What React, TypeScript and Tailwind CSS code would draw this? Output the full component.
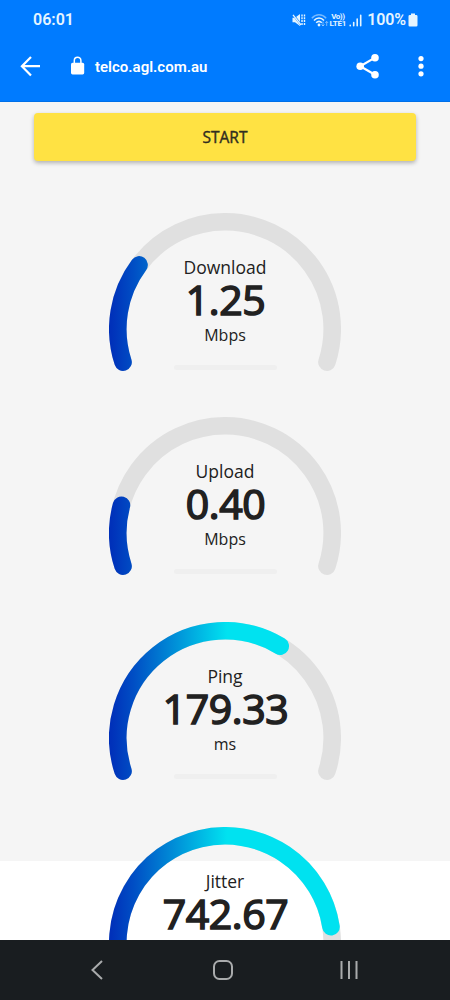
interface GaugeProps {
  label: string
  value: string
  unit: string
  // degrees covered by the coloured arc, out of 216
  sweep: number
}

const gauges: GaugeProps[] = [
  { label: 'Download', value: '1.25', unit: 'Mbps', sweep: 54.7 },
  { label: 'Upload', value: '0.40', unit: 'Mbps', sweep: 33 },
  { label: 'Ping', value: '179.33', unit: 'ms', sweep: 139 },
  { label: 'Jitter', value: '742.67', unit: 'ms', sweep: 189.3 },
]

const CENTER = 116
const RADIUS = 107.2

function arcPath(sweep: number) {
  const point = (deg: number) => {
    const rad = ((162 + deg) * Math.PI) / 180
    return `${(CENTER + RADIUS * Math.cos(rad)).toFixed(2)} ${(CENTER + RADIUS * Math.sin(rad)).toFixed(2)}`
  }
  return `M${point(0)}A${RADIUS} ${RADIUS} 0 ${sweep > 180 ? 1 : 0} 1 ${point(sweep)}`
}

function Gauge({ label, value, unit, sweep }: GaugeProps) {
  const gradientId = `arc-${label}`
  return (
    <div className="relative h-[204.6px] w-[232px] shrink-0 text-[#212121]">
      <svg width="232" height="160" viewBox="0 0 232 160" className="absolute top-0 left-0" fill="none" strokeWidth="17.6" strokeLinecap="round">
        <defs>
          <linearGradient id={gradientId} gradientUnits="userSpaceOnUse" x1="2" y1="0" x2="118" y2="0">
            <stop offset="0" stopColor="#0030b9" />
            <stop offset="0.2" stopColor="#004fc5" />
            <stop offset="1" stopColor="#00e2f0" />
          </linearGradient>
        </defs>
        <path d={arcPath(216)} stroke="#e0e0e0" />
        <path d={arcPath(sweep)} stroke={`url(#${gradientId})`} />
      </svg>
      <div className="relative flex flex-col items-center pt-[42px]">
        <div className="text-[17.5px] leading-6">{label}</div>
        <div className="h-[44px] pl-[1px] text-[41px] leading-[40px] tracking-[-0.4px] [-webkit-text-stroke:1.6px_#212121]">{value}</div>
        <div className="text-[16px] leading-6">{unit}</div>
        <div className="mt-[18px] h-[5px] w-[103px] rounded-sm bg-[#efefef]" />
      </div>
    </div>
  )
}

function StatusBar() {
  return (
    <div className="flex h-10 items-center justify-between pr-[32px] pl-[33px] text-[#e6f5ff]">
      <span className="text-[16px] font-semibold">06:01</span>
      <div className="flex items-center">
        <svg width="14" height="14" viewBox="0 0 14 14" fill="currentColor">
          <path d="M0.5 4.8H3L8 1V13L3 9.3H0.5Z" />
          <path d="M0.8 1.2L9.2 12.2" stroke="#007bff" strokeWidth="2" />
          <path d="M1 1.8L9 12" stroke="currentColor" strokeWidth="1.3" />
          <path d="M10 1.5V12M12.5 1.5V12" stroke="currentColor" strokeWidth="1.4" strokeDasharray="2 0.8" fill="none" />
        </svg>
        <svg width="18" height="15" viewBox="0 0 18 15" fill="none" stroke="currentColor" className="ml-[5px]">
          <path d="M0.8 5.2C5 0.6 11 0.6 15.2 5.2" strokeWidth="1.4" opacity="0.5" />
          <path d="M3 7.5C6 4.2 10 4.2 13 7.5" strokeWidth="1.6" />
          <path d="M5.2 9.7C7 7.9 9 7.9 10.8 9.7" strokeWidth="1.6" />
          <circle cx="8" cy="12" r="1.4" fill="currentColor" stroke="none" />
          <path d="M12 8.5V13M10.5 11.5L12 13L13.5 11.5M15.7 13V8.5M14.2 10L15.7 8.5L17.2 10" strokeWidth="0.9" opacity="0.55" />
        </svg>
        <div className="flex w-[17px] flex-col items-center text-[8px] leading-[8px] font-bold">
          <span className="-mb-px tracking-[-0.5px]">Vo))</span>
          <span className="text-[8px] tracking-[-0.2px]">LTE1</span>
        </div>
        <svg width="13" height="13" viewBox="0 0 13 13" stroke="currentColor" strokeWidth="1.6" strokeLinecap="round" className="ml-[3px]">
          <path d="M1.2 11.2V11.8M4.7 8.5V11.8M8.2 5V11.8M11.7 1.2V11.8" />
        </svg>
        <span className="ml-[5px] text-[16px] leading-5 font-semibold tracking-[-0.15px]">100%</span>
        <svg width="10" height="14" viewBox="0 0 10 14" fill="currentColor" className="ml-[2px]">
          <path d="M3 0.5H7V2H8.2Q9.5 2 9.5 3.3V12.2Q9.5 13.5 8.2 13.5H1.8Q0.5 13.5 0.5 12.2V3.3Q0.5 2 1.8 2H3Z" />
        </svg>
      </div>
    </div>
  )
}

function Toolbar() {
  return (
    <div className="flex h-[62px] items-start pt-[14px] pl-5 text-white">
      <svg width="21" height="24" viewBox="0 0 21 24" fill="none" stroke="currentColor" strokeWidth="2.2">
        <path d="M20 12.2H2.2M11 3L1.9 12.2L11 21.4" />
      </svg>
      <svg width="14" height="24" viewBox="0 0 14 24" fill="currentColor" className="ml-[30px]">
        <rect x="0" y="8.8" width="13.2" height="11.6" rx="1.6" />
        <path d="M3.3 9.5V6.7C3.3 2.2 9.9 2.2 9.9 6.7V9.5" fill="none" stroke="currentColor" strokeWidth="1.5" />
      </svg>
      <span className="ml-[10px] text-[15px] leading-[26px] font-semibold">telco.agl.com.au</span>
      <svg width="24" height="26" viewBox="0 0 24 26" fill="currentColor" className="ml-auto">
        <path d="M19 3.6L4.2 12.2L19 20.8" fill="none" stroke="currentColor" strokeWidth="2.2" />
        <circle cx="19" cy="3.8" r="3.8" />
        <circle cx="4.2" cy="12.2" r="3.8" />
        <circle cx="19" cy="20.8" r="3.8" />
      </svg>
      <svg width="6" height="24" viewBox="0 0 6 24" fill="currentColor" className="mr-[26px] ml-[38px]">
        <circle cx="3" cy="4.6" r="2.6" />
        <circle cx="3" cy="12.2" r="2.6" />
        <circle cx="3" cy="19.8" r="2.6" />
      </svg>
    </div>
  )
}

function NavBar() {
  return (
    <nav className="flex h-[60px] shrink-0 items-center bg-[#191d20] pl-[90px] text-[#a9abac]">
      <svg width="14" height="22" viewBox="0 0 14 22" fill="none" stroke="currentColor" strokeWidth="2">
        <path d="M12 2L2.5 11L12 20" />
      </svg>
      <svg width="22" height="22" viewBox="0 0 22 22" fill="none" stroke="currentColor" strokeWidth="2" className="ml-[108px]">
        <rect x="2" y="2" width="18" height="18" rx="5.5" />
      </svg>
      <svg width="20" height="22" viewBox="0 0 20 22" stroke="currentColor" strokeWidth="2" className="ml-[105px]">
        <path d="M2.5 2V20M10 2V20M17.5 2V20" />
      </svg>
    </nav>
  )
}

export default function App() {
  return (
    <div className="flex h-[1000px] w-[450px] flex-col overflow-hidden bg-white">
      <header className="h-[102px] shrink-0 border-b border-[#0070e8] bg-[#007bff] font-[Roboto,sans-serif]">
        <StatusBar />
        <Toolbar />
      </header>
      <main className="min-h-0 flex-1 overflow-hidden font-['Open_Sans','Noto_Sans',sans-serif]">
        <div className="flex h-[758.5px] flex-col items-center bg-[#f5f5f5] pt-[11px]">
          <button
            type="button"
            className="mb-[51.8px] h-12 w-[382px] shrink-0 rounded bg-[#ffe243] pt-px text-[15.5px] text-[#302d20] shadow-[0_2px_4px_rgba(0,0,0,0.28)] [-webkit-text-stroke:0.4px_#302d20]"
          >
            START
          </button>
          {gauges.map(gauge => (
            <Gauge key={gauge.label} {...gauge} />
          ))}
        </div>
      </main>
      <NavBar />
    </div>
  )
}
